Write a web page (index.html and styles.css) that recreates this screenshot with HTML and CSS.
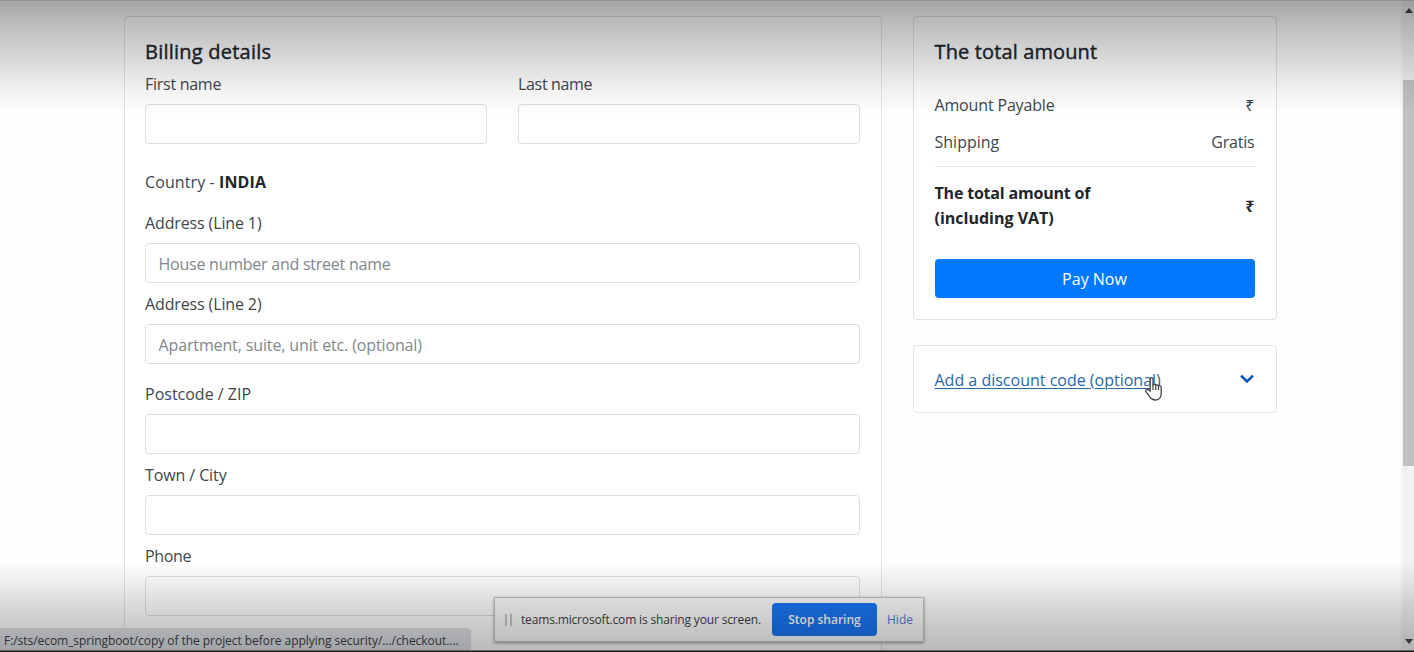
FILE: index.html
```html
<!DOCTYPE html>
<html lang="en">
<head>
<meta charset="utf-8">
<title>Checkout</title>
<link rel="stylesheet" href="styles.css">
</head>
<body>
<div class="screen">
  <main class="page">
    <section class="card billing">
      <h5 class="title t-billing">Billing details</h5>
      <div class="names">
        <div class="field"><label class="t-first" for="first">First name</label><input id="first"></div>
        <div class="field"><label class="t-last" for="last">Last name</label><input id="last"></div>
      </div>
      <p class="country"><span class="t-country">Country - </span><strong class="t-india">INDIA</strong></p>
      <div class="field"><label class="t-addr" for="a1">Address (Line 1)</label><input id="a1" class="t-house" placeholder="House number and street name"></div>
      <div class="field wide-gap"><label class="t-addr" for="a2">Address (Line 2)</label><input id="a2" class="t-apart" placeholder="Apartment, suite, unit etc. (optional)"></div>
      <div class="field"><label class="t-post" for="zip">Postcode / ZIP</label><input id="zip"></div>
      <div class="field"><label class="t-town" for="city">Town / City</label><input id="city"></div>
      <div class="field"><label class="t-phone" for="phone">Phone</label><input id="phone"></div>
    </section>
    <aside class="side">
      <section class="card total">
        <h5 class="title t-total">The total amount</h5>
        <div class="line first"><span class="t-payable">Amount Payable</span><span class="rupee">₹</span></div>
        <div class="line"><span class="t-ship">Shipping</span><span class="t-gratis">Gratis</span></div>
        <div class="line sum"><strong><span class="t-sum1">The total amount of</span><br><span class="t-sum2">(including VAT)</span></strong><strong class="rupee">₹</strong></div>
        <button class="pay"><span class="t-pay">Pay Now</span></button>
      </section>
      <section class="card discount">
        <a class="t-discount" href="#">Add a discount code (optional)</a>
        <svg class="chevron" width="16" height="10" viewBox="0 0 16 10"><path d="M2 1.7 8 7.5 14 1.7" fill="none" stroke="#0b56b3" stroke-width="2.5"/></svg>
      </section>
    </aside>
  </main>
  <div class="scrollbar">
    <svg class="up" width="8" height="5" viewBox="0 0 8 5"><path d="M0 5 4 0 8 5Z"/></svg>
    <div class="thumb"></div>
    <svg class="down" width="8" height="5" viewBox="0 0 8 5"><path d="M0 0H8L4 5Z"/></svg>
  </div>
  <div class="status"><span class="t-status">F:/sts/ecom_springboot/copy of the project before applying security/.../checkout....</span></div>
  <div class="share">
    <span class="grip"></span>
    <span class="message t-share">teams.microsoft.com is sharing your screen.</span>
    <button class="stop"><span class="t-stop">Stop sharing</span></button>
    <a class="hide t-hide" href="#">Hide</a>
  </div>
  <svg class="cursor" width="20" height="26" viewBox="0 0 20 26"><path d="M6.2 15.2V3.2C6.2 1.2 9 1.2 9 3.2V9.2C9.1 7.8 11.8 7.9 11.8 9.6 12 8.4 14.5 8.6 14.5 10.3 14.9 9.2 17.2 9.4 17.2 11.2V17.2C17.2 21.5 15.3 24 11.6 24 8.2 24 6.6 22.5 5.2 19.9L2 15.9C.9 14.2 3 12.8 4.3 13.8Z" fill="#fff" stroke="#444" stroke-width="1.3" stroke-linejoin="round"/><path d="M9 9V14M11.8 9.8V14M14.5 10.5V14" fill="none" stroke="#444" stroke-width="1.2"/></svg>
  <div class="shade"></div>
  <div class="bottom-edge"></div>
</div>
</body>
</html>
```
FILE: styles.css
```css
* { box-sizing: border-box; }
body { margin: 0; font-family: "Open Sans", "Noto Sans", sans-serif; font-size: 16px; line-height: 25px; color: #40464b; }
.screen { position: relative; display: flex; width: 1414px; height: 652px; overflow: hidden; background: #fefefe; }
.page { display: flex; align-items: flex-start; gap: 31px; flex: 1; padding: 16px 0 0 124px; }
.card { border: 1px solid #e2e2e2; border-radius: 4px; padding: 20px; background: #fff; }
.billing { width: 758px; height: 660px; padding-right: 21px; }
.side { width: 364px; }
.side .card { padding-left: 20.5px; padding-right: 21.5px; }
.title { margin: 0; font-size: 20px; line-height: 29px; height: 28px; font-weight: 500; color: #20262b; white-space: nowrap; -webkit-text-stroke: 0.4px #20262b; }
.names { display: grid; grid-template-columns: 342px 342px; gap: 31px; margin: 6px 0 25px; height: 73px; }
.field { margin-bottom: 8px; }
.wide-gap { margin-bottom: 17px; }
label { display: block; width: max-content; height: 25px; padding-top: 1px; margin-bottom: 8px; white-space: nowrap; }
input { display: block; width: 100%; height: 40px; padding: 2px 12.5px 0; border: 1px solid #dcdfe1; border-radius: 4px; background: #fff; font: inherit; color: #40464b; outline: 0; }
input::placeholder { color: #81878c; opacity: 1; }
.country { margin: 0 0 16px; height: 25px; padding-top: 1px; white-space: pre; }
strong { color: #20262b; font-weight: 700; }
.total { height: 304px; }
.line { display: flex; justify-content: space-between; align-items: center; height: 25px; margin-bottom: 12px; padding-top: 1px; white-space: nowrap; }
.first { margin-top: 27px; }
.sum { height: 76px; margin: 0; border-top: 1px solid #e6e6e6; padding: 3px 0 0; }
.rupee { font-size: 16px; line-height: 22px; }
.pay { display: block; width: 100%; height: 39px; margin-top: 17px; padding-top: 2px; border: 0; border-radius: 4px; background: #0078ff; color: #fff; font: inherit; }
.discount { display: flex; justify-content: space-between; align-items: center; height: 68px; margin-top: 25px; }
.discount a { padding-top: 2px; color: #2868ad; text-underline-offset: 2px; text-decoration-thickness: 1px; white-space: nowrap; }
.scrollbar { display: flex; flex-direction: column; align-items: center; width: 12px; height: 652px; background: #f1f1f1; box-shadow: -2px 0 #fafafa; }
.up { margin: 8px 0 67px 2px; }
.down { margin: auto 0 8px 2px; }
.scrollbar path { fill: #444; }
.thumb { width: 11px; height: 386px; margin-left: 1px; background: #c1c1c1; }
.status { position: absolute; left: 0; bottom: 0; width: 471px; height: 24px; padding-left: 4px; background: #dee1e6; border-top-right-radius: 4px; font-size: 12px; line-height: 25px; color: #3d4043; white-space: nowrap; z-index: 2; }
.share { position: absolute; left: 494px; top: 597px; width: 430px; height: 45px; display: flex; align-items: center; background: #fcfcfc; border: 1px solid #c4c4c4; box-shadow: 0 1px 3px #0006; font-size: 12px; white-space: nowrap; z-index: 2; }
.grip { width: 7px; height: 12px; margin: 0 9px 0 10px; border-left: 2px solid #c8c8c8; border-right: 2px solid #c8c8c8; }
.stop { width: 105px; height: 33px; margin-left: auto; border: 0; border-radius: 4px; background: #1a76f2; color: #fff; font: 600 12px "Open Sans", sans-serif; }
.hide { width: 36px; margin-left: 10px; color: #4c7cd9; text-decoration: none; }
.message { color: #3f4246; }
.cursor { position: absolute; left: 1144px; top: 376px; }
.shade { position: absolute; inset: 0; z-index: 3; pointer-events: none; background: linear-gradient(#0005 0, #0005 4px, #00000040 25px, #00000030 45px, #0000001f 67px, #0000000e 88px, #0000 114px, #0000 560px, #00000010 580px, #00000026 605px, #00000038 630px, #00000046 652px); border-top: 1px solid #0003; }
.bottom-edge { position: absolute; left: 0; right: 0; bottom: 0; height: 2px; background: #151515; border-top: 1px solid #666; z-index: 4; }

/* Tracking */
.t-billing { letter-spacing: 0.23px; }
.t-total { letter-spacing: 0.13px; }
.t-first { letter-spacing: -0.27px; }
.t-last { letter-spacing: -0.33px; }
.t-country { letter-spacing: 0.1px; }
.t-india { letter-spacing: 0.1px; }
.t-addr { letter-spacing: -0.13px; }
.t-house { letter-spacing: -0.24px; }
.t-apart { letter-spacing: -0.13px; }
.t-town { letter-spacing: -0.1px; }
.t-phone { letter-spacing: -0.35px; }
.t-payable { letter-spacing: -0.16px; }
.t-gratis { letter-spacing: -0.2px; }
.t-sum1 { letter-spacing: -0.19px; }
.t-status { letter-spacing: -0.05px; }
.t-share { letter-spacing: -0.16px; }
```
